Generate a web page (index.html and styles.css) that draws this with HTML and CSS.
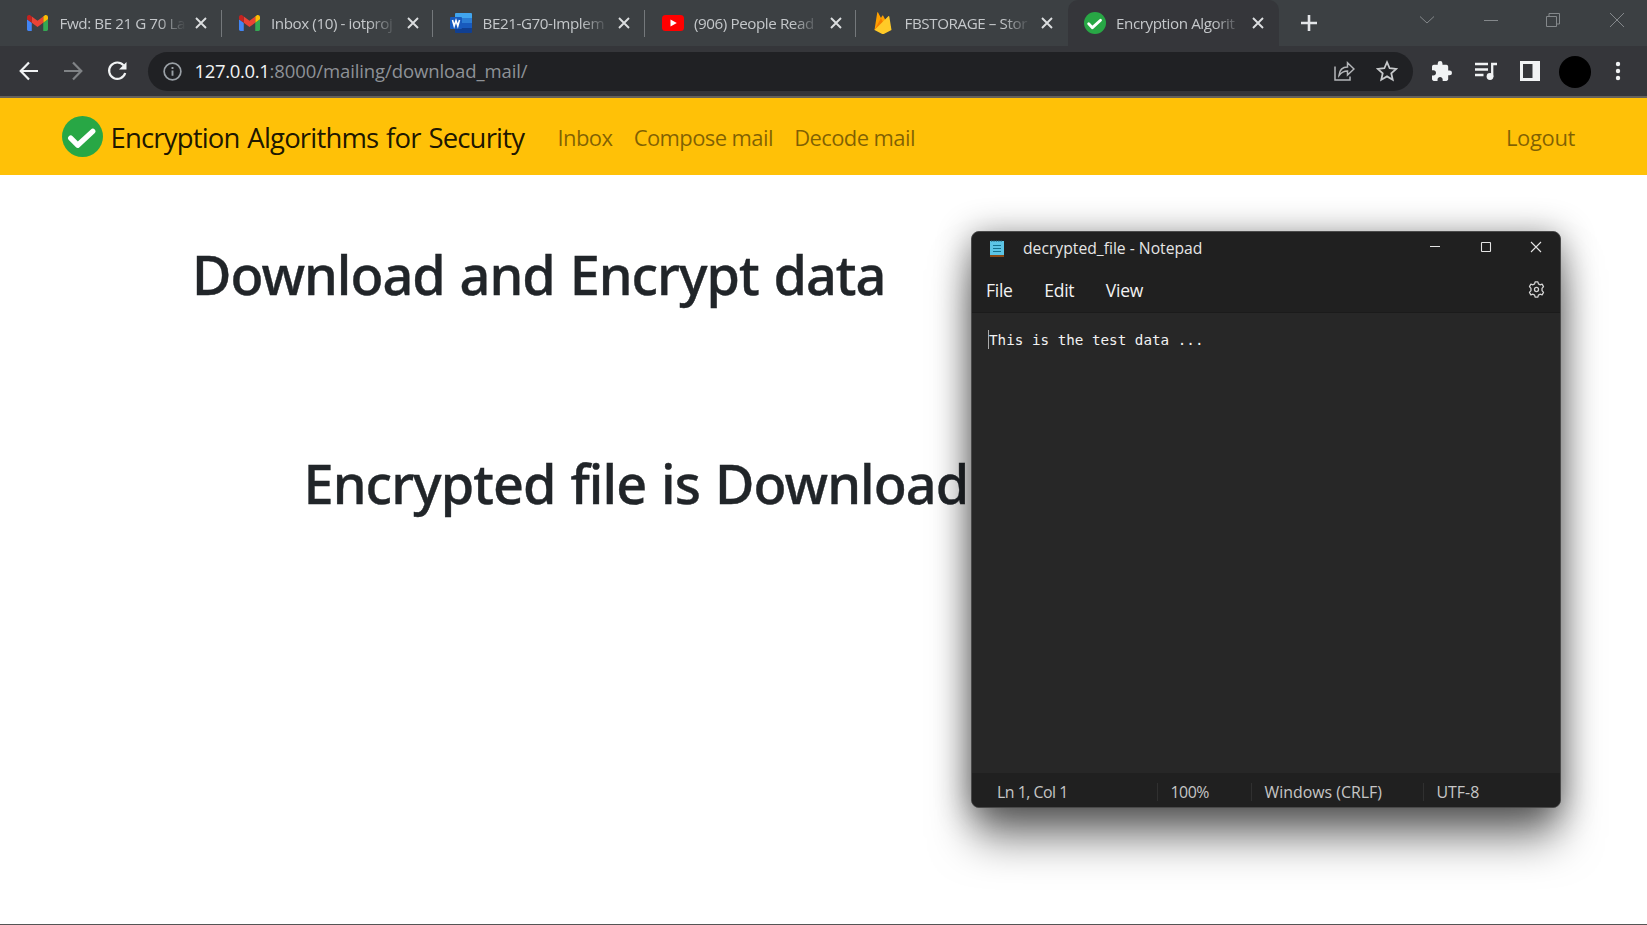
FILE: index.html
```html
<!DOCTYPE html>
<html lang="en">
<head>
<meta charset="utf-8">
<title>Encryption Algorithms for Security</title>
<link rel="stylesheet" href="styles.css">
</head>
<body>
<svg class="defs" width="0" height="0" aria-hidden="true">
  <defs>
    <symbol id="gmail" viewBox="52 42 88 66">
      <path fill="#4285f4" d="M58 108h14V74L52 59v43c0 3.320 2.690 6 6 6"/>
      <path fill="#34a853" d="M120 108h14c3.320 0 6-2.690 6-6V59l-20 15"/>
      <path fill="#fbbc04" d="M120 48v26l20-15v-8c0-7.420-8.470-11.650-14.400-7.200"/>
      <path fill="#ea4335" d="M72 74V48l24 18 24-18v26L96 92"/>
      <path fill="#c5221f" d="M52 51v8l20 15V48l-5.600-4.200c-5.940-4.450-14.400-.22-14.400 7.200"/>
    </symbol>
    <symbol id="close" viewBox="0 0 12 12"><path d="M1 1l10 10M11 1L1 11" fill="none" stroke="#dcdee0" stroke-width="1.900"/></symbol>
    <symbol id="check" viewBox="0 0 40 40">
      <circle cx="20" cy="20" r="20" fill="#28a745"/>
      <path d="M8.500 21.500l6.800 7L30 15" fill="none" stroke="#fff" stroke-width="5.200" stroke-linecap="round" stroke-linejoin="round"/>
    </symbol>
  </defs>
</svg>

<header class="browser">
  <div class="tabs">
    <div class="tab"><svg class="fav gmail"><use href="#gmail"/></svg><span class="label">Fwd: BE 21 G 70 La</span><svg class="x"><use href="#close"/></svg></div>
    <div class="tab"><svg class="fav gmail"><use href="#gmail"/></svg><span class="label">Inbox (10) - iotproj</span><svg class="x"><use href="#close"/></svg></div>
    <div class="tab"><svg class="fav" viewBox="0 0 22 22">
      <path fill="#41a5ee" d="M6 1h15a1 1 0 0 1 1 1v5H5V2a1 1 0 0 1 1-1z"/><path fill="#2b7cd3" d="M5 6h17v5H5z"/><path fill="#185abd" d="M5 11h17v5H5z"/><path fill="#103f91" d="M5 16h17v4a1 1 0 0 1-1 1H6a1 1 0 0 1-1-1z"/><rect y="5" width="12" height="12" rx="1" fill="#185abd"/><path d="M2.500 8l1.700 6L6 8.500 7.800 14l1.700-6" fill="none" stroke="#fff" stroke-width="1.600"/></svg><span class="label">BE21-G70-Implem</span><svg class="x"><use href="#close"/></svg></div>
    <div class="tab"><svg class="fav" viewBox="0 0 22 22"><rect y="3" width="22" height="16" rx="3.500" fill="#f00"/><path d="M8.500 7.500v7l6.300-3.500z" fill="#fff"/></svg><span class="label">(906) People Read</span><svg class="x"><use href="#close"/></svg></div>
    <div class="tab fire"><svg class="fav" viewBox="0 0 22 22">
      <path fill="#ffa000" d="M2.500 18L5.200.8c.1-.5.7-.6 1-.1L9 6l1.200-2.200c.2-.4.8-.4 1 0L18.500 18z"/><path fill="#f57c00" d="M11.700 11.500L9 6 2.500 18z"/><path fill="#ffca28" d="M19.500 18L17.300 4.500c-.1-.5-.7-.7-1-.3L2.500 18l7.700 4c.5.300 1.100.3 1.600 0z"/></svg><span class="label">FBSTORAGE – Stor</span><svg class="x"><use href="#close"/></svg></div>
    <div class="tab active"><svg class="fav"><use href="#check"/></svg><span class="label">Encryption Algorit</span><svg class="x"><use href="#close"/></svg></div>
    <div class="rest">
      <svg class="plus" viewBox="0 0 18 18"><path d="M9 1v16M1 9h16" stroke="#e3e5e8" stroke-width="2.600"/></svg>
      <div class="wincontrols">
        <svg viewBox="0 0 16 16"><path d="M1 4.500l7 6.500 7-6.500"/></svg>
        <svg viewBox="0 0 16 16"><path d="M1 8.500h14"/></svg>
        <svg viewBox="0 0 16 16"><path d="M1.500 4.500h10v10h-10zM4 4V1.500h10.500V12H12"/></svg>
        <svg viewBox="0 0 16 16"><path d="M1 1l14 14M15 1L1 15"/></svg>
      </div>
    </div>
  </div>
  <div class="toolbar">
    <div class="history">
      <svg viewBox="0 0 20 20" stroke="#f1f3f4"><path d="M19 10H2M10 1.500L1.700 10l8.300 8.500"/></svg>
      <svg viewBox="0 0 20 20" stroke="#808386"><path d="M1 10h17M10 1.500l8.300 8.500-8.300 8.500"/></svg>
      <svg viewBox="0 0 20 20" stroke="#f1f3f4"><path d="M16.600 4.400A8.200 8.200 0 1 0 18.200 12"/><path d="M19.500 1v7.500H12z" fill="#f1f3f4" stroke="none"/></svg>
    </div>
    <div class="omnibox">
      <svg class="info" viewBox="0 0 20 20"><circle cx="10" cy="10" r="8.800" fill="none" stroke="#9aa0a6" stroke-width="1.800"/><path d="M10 9v5.500M10 5.300v2" stroke="#9aa0a6" stroke-width="2"/></svg>
      <div class="url"><span class="host">127.0.0.1</span><span class="path">:8000/mailing/download_mail/</span></div>
      <svg class="share" viewBox="0 0 21 20"><path d="M1 5.500V19h15v-3.500M5 14.500C5.500 9 8.500 6 13.500 6V1.800L20 8l-6.500 6v-4C10 10 7.500 11.200 5 14.500z"/></svg>
      <svg class="star" viewBox="0 0 20 20"><path d="M10 2l2.400 5.500 6 .6-4.500 4 1.300 5.900L10 14.900 4.800 18l1.300-5.900-4.500-4 6-.6z"/></svg>
    </div>
    <div class="actions">
      <svg viewBox="2 1 21 21" width="20" height="20"><path fill="#f1f3f4" d="M20.500 11H19V7c0-1.100-.9-2-2-2h-4V3.500a2.500 2.500 0 0 0-5 0V5H4c-1.100 0-1.990.9-1.990 2v3.800H3.500c1.490 0 2.700 1.210 2.700 2.700s-1.210 2.700-2.700 2.700H2V20c0 1.100.9 2 2 2h3.800v-1.500c0-1.490 1.210-2.700 2.700-2.700 1.490 0 2.700 1.210 2.700 2.700V22H17c1.100 0 2-.9 2-2v-4h1.500a2.500 2.500 0 0 0 0-5z"/></svg>
      <svg viewBox="0 0 22 18" width="22" height="18"><path d="M0 2h13M0 7.500h13M0 13h8.500M17.200 15V2H22" stroke="#f1f3f4" stroke-width="2.300" fill="none"/><circle cx="15" cy="14.500" r="3.400" fill="#f1f3f4"/></svg>
      <svg viewBox="0 0 20 20" width="20" height="20"><path fill="#f1f3f4" fill-rule="evenodd" d="M0 0h20v20H0zM3 3v14h9.500V3z"/></svg>
      <span class="avatar"></span>
      <svg viewBox="0 0 6 20" width="6" height="20" fill="#f1f3f4"><circle cx="3" cy="3" r="2.200"/><circle cx="3" cy="10" r="2.200"/><circle cx="3" cy="17" r="2.200"/></svg>
    </div>
  </div>
</header>

<nav class="navbar">
  <svg class="logo"><use href="#check"/></svg>
  <span class="brand">Encryption Algorithms for Security</span>
  <div class="links"><a>Inbox</a><a>Compose mail</a><a>Decode mail</a></div>
  <a class="logout">Logout</a>
</nav>

<main class="page">
  <h1>Download and Encrypt data</h1>
  <h1 class="second">Encrypted file is Download</h1>
</main>

<section class="notepad">
  <div class="titlebar">
    <svg class="noteicon" viewBox="0 0 14 17"><path fill="#8a4a17" d="M0 14h14v3H0z"/><path fill="#5cc5e6" d="M0 1h14v14H0z"/><path d="M1 .7h12" stroke="#1c4a5c" stroke-width="1.400" stroke-dasharray="1.300 1.100"/><path d="M3 5.500h8M3 8.500h8M3 11.500h8" stroke="#14728f" stroke-width="1.200"/></svg>
    <span class="name">decrypted_file - Notepad</span>
    <div class="buttons">
      <svg viewBox="0 0 12 12"><path d="M1 5.500h10"/></svg>
      <svg viewBox="0 0 12 12"><rect x="1.500" y="1.500" width="9" height="9" rx=".5"/></svg>
      <svg viewBox="0 0 12 12"><path d="M1 1l10 10M11 1L1 11"/></svg>
    </div>
  </div>
  <div class="menubar">
    <span>File</span><span>Edit</span><span>View</span>
    <svg class="gear" viewBox="0 0 16 16"><path d="M6.200 2.700L6.700.8h2.600l.5 1.900 1.500.9 2-.6 1.300 2.300L13.200 7v2l1.400 1.700-1.300 2.300-2-.6-1.500.9-.5 1.900H6.700l-.5-1.900-1.500-.9-2 .6-1.300-2.300L2.800 9V7L1.400 5.300 2.700 3l2 .6z"/><circle cx="8" cy="8" r="1.900"/></svg>
  </div>
  <div class="editor"><span class="caret"></span><span>This is the test data ...</span></div>
  <div class="status">
    <span class="tight">Ln 1, Col 1</span><span class="tight">100%</span><span>Windows (CRLF)</span><span>UTF-8</span>
  </div>
</section>
</body>
</html>
```
FILE: styles.css
```css
* { box-sizing: border-box; }
body {
  margin: 0;
  width: 1647px;
  height: 925px;
  overflow: hidden;
  position: relative;
  display: flex;
  flex-direction: column;
  background: #fff;
  font-family: "Open Sans", "Noto Sans", sans-serif;
}
svg { display: block; flex: none; }
.defs { position: absolute; }

.browser { background: #35363a; height: 98px; border-bottom: 2px solid #66625c; flex: none; }
.tabs { display: flex; height: 46px; background: #3c4043; padding-left: 10px; }
.tab {
  width: 211.500px;
  flex: none;
  display: flex;
  align-items: center;
  position: relative;
  padding: 0 14.500px 0 17px;
}
.tab::after {
  content: "";
  position: absolute;
  right: 0;
  top: 10px;
  width: 1px;
  height: 27px;
  background: #74787b;
}
.tab:nth-child(n+5)::after { display: none; }
.fav { width: 22px; height: 22px; }
.fav.gmail { width: 21px; height: 16px; margin-right: 1px; }
.label {
  margin-left: 10.500px;
  width: 126px;
  flex: none;
  white-space: nowrap;
  font-size: 15.200px;
  line-height: 24px;
  letter-spacing: -.42px;
  color: #c4c7ca;
  -webkit-mask-image: linear-gradient(90deg, #000 78%, transparent);
  mask-image: linear-gradient(90deg, #000 78%, transparent);
}
.x { width: 12px; height: 12px; margin-left: auto; }
.fire { padding-left: 16px; }
.active {
  background: #35363a;
  border-radius: 10px 10px 0 0;
  padding-right: 15.500px;
  padding-left: 16px;
}
.rest { flex: 1; display: flex; align-items: center; padding-left: 21px; }
.plus { width: 18px; height: 18px; }
.wincontrols { display: flex; gap: 48px; margin: -6px 22px 0 auto; }
.wincontrols svg { width: 16px; height: 16px; fill: none; stroke: #84888b; stroke-width: 1; }
.wincontrols svg:nth-child(-n+2) { position: relative; left: 2px; }

.toolbar { height: 50px; display: flex; align-items: center; }
.history { display: flex; gap: 24px; padding-left: 19px; width: 148px; }
.history svg { width: 20px; height: 20px; fill: none; stroke-width: 2.200; }
.omnibox {
  width: 1265px;
  height: 39px;
  border-radius: 20px;
  background: #202124;
  display: flex;
  align-items: center;
  padding: 0 15px;
  flex: none;
}
.info { width: 19px; height: 19px; }
.url { margin-left: 12.500px; font-size: 18.500px; line-height: 30px; white-space: nowrap; flex: 1; }
.host { color: #f1f3f4; letter-spacing: -.33px; }
.path { color: #8e9297; letter-spacing: -.1px; }
.share { width: 21px; height: 20px; fill: none; stroke: #b4b6b9; stroke-width: 1.500; }
.star { width: 22px; height: 22px; margin-left: 21.500px; fill: none; stroke: #c8cacc; stroke-width: 1.600; }
.actions { flex: 1; display: flex; align-items: center; padding-left: 19px; gap: 23px; }
.avatar { width: 32px; height: 32px; border-radius: 50%; background: #000; margin: 2px 1px 0 -4px; }

.navbar {
  height: 77px;
  flex: none;
  background: #ffc107;
  display: flex;
  align-items: center;
  padding: 0 72px 0 62px;
}
.logo { width: 41px; height: 41px; }
.brand {
  margin-left: 7.500px;
  padding-top: 2px;
  width: 436px;
  font-size: 27.500px;
  letter-spacing: -.82px;
  word-spacing: 1.400px;
  line-height: 40px;
  white-space: nowrap;
  color: rgba(0, 0, 0, .9);
}
.links { display: flex; gap: 21.300px; padding-top: 1px; margin-left: 11px; }
.links a, .logout {
  font-size: 22px;
  line-height: 32px;
  letter-spacing: -.6px;
  white-space: nowrap;
  color: rgba(0, 0, 0, .5);
}
.logout { margin-left: auto; padding-top: 1px; letter-spacing: -.36px; }

.page { flex: 1; border-bottom: 1px solid #555; padding: 64px 0 0 192px; }
h1 {
  margin: 0;
  font: 500 54px/70px "Noto Sans", sans-serif;
  letter-spacing: -1px;
  word-spacing: 1.800px;
  white-space: nowrap;
  color: #212529;
  -webkit-text-stroke: .4px #212529;
}
.second { margin: 139px 0 0 111.500px; letter-spacing: -.93px; }

/* Desktop window floating over the page */
.notepad {
  position: absolute;
  left: 971px;
  top: 231px;
  width: 590px;
  height: 577px;
  display: flex;
  flex-direction: column;
  background: #272727;
  border: 1px solid #4a4a4a;
  border-radius: 8px;
  overflow: hidden;
  color: #f2f2f2;
  box-shadow: 0 34px 44px -4px rgba(0, 0, 0, .5), 0 4px 34px rgba(0, 0, 0, .45);
}
.titlebar { height: 32px; background: #202020; display: flex; align-items: center; padding: 0 18px 0 18px; }
.noteicon { width: 14px; height: 17px; }
.name { margin-left: 19px; font-size: 15.700px; line-height: 24px; letter-spacing: 0; color: #e6e6e6; white-space: nowrap; }
.buttons { margin: -2px 0 0 auto; display: flex; gap: 38.500px; }
.buttons svg { width: 12px; height: 12px; fill: none; stroke: #e4e4e4; stroke-width: 1.100; }
.menubar {
  height: 49px;
  background: #202020;
  border-bottom: 1px solid #1b1b1b;
  display: flex;
  align-items: center;
  gap: 31.500px;
  padding: 4px 15px 0 14px;
  font-size: 17.500px;
  letter-spacing: -.25px;
}
.gear { width: 17px; height: 17px; margin: -2px 0 0 auto; fill: none; stroke: #d4d4d4; stroke-width: 1.200; stroke-linejoin: round; }
.editor {
  flex: 1;
  display: flex;
  align-items: flex-start;
  padding: 17px 0 0 16px;
  font: 14.250px/20px "DejaVu Sans Mono", monospace;
  white-space: pre;
}
.caret { width: 1px; height: 19px; background: #aaa; }
.status {
  height: 34px;
  background: #202020;
  display: grid;
  grid-template-columns: 160px 94px 172px 1fr;
  align-items: center;
  padding: 4px 0 0 25px;
  font-size: 15.900px;
  color: #c6c6c6;
}
.status span { line-height: 18px; white-space: nowrap; }
.status span + span { border-left: 1px solid #303030; padding-left: 12.500px; }
.status .tight { letter-spacing: -.5px; }
```
